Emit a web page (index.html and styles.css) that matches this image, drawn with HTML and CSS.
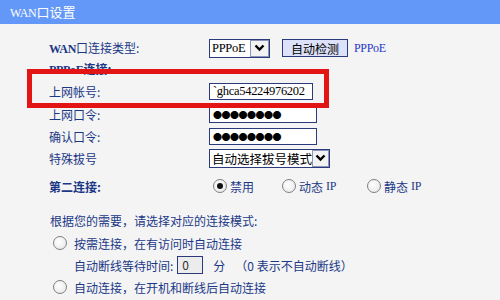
FILE: index.html
```html
<!DOCTYPE html>
<html lang="zh-CN">
  <head>
    <meta charset="UTF-8" />
    <title>WAN口设置</title>
    <link rel="stylesheet" href="styles.css">
  </head>
  <body>
    <div class="panel-title"><span class="en">WAN</span>口设置</div>

    <div class="panel">
      <div class="row first">
        <div class="label"><span class="en">WAN</span>口连接类型:</div>
        <div class="field">
          <div class="select small">
            <span class="select-text en">PPPoE</span>
            <span class="select-arrow">
              <svg width="11" height="8" viewBox="0 0 11 8"><path d="M1.5 1.5 L5.5 5.5 L9.5 1.5" fill="none" stroke="#000" stroke-width="2.4"/></svg>
            </span>
          </div>
          <button class="btn">自动检测</button>
          <span class="detected en">PPPoE</span>
        </div>
      </div>

      <div class="row sub">
        <div class="label bold"><span class="en">PPPoE</span>连接:</div>
      </div>

      <div class="row account">
        <div class="label">上网帐号:</div>
        <div class="field">
          <div class="input wide en">`ghca54224976202</div>
        </div>
      </div>

      <div class="row">
        <div class="label">上网口令:</div>
        <div class="field">
          <div class="input pwd">●●●●●●●●</div>
        </div>
      </div>

      <div class="row">
        <div class="label">确认口令:</div>
        <div class="field">
          <div class="input pwd">●●●●●●●●</div>
        </div>
      </div>

      <div class="row">
        <div class="label">特殊拔号</div>
        <div class="field">
          <div class="select large">
            <span class="select-text">自动选择拔号模式</span>
            <span class="select-arrow">
              <svg width="11" height="8" viewBox="0 0 11 8"><path d="M1.5 1.5 L5.5 5.5 L9.5 1.5" fill="none" stroke="#000" stroke-width="2.4"/></svg>
            </span>
          </div>
        </div>
      </div>

      <div class="row second">
        <div class="label bold">第二连接:</div>
        <div class="field radios">
          <label class="opt"><span class="radio checked"></span>禁用</label>
          <label class="opt"><span class="radio"></span>动态 <span class="en">IP</span></label>
          <label class="opt"><span class="radio"></span>静态 <span class="en">IP</span></label>
        </div>
      </div>

      <div class="modes">
        <p class="hint">根据您的需要，请选择对应的连接模式:</p>
        <div class="mode"><span class="radio"></span>按需连接，在有访问时自动连接</div>
        <div class="mode indent">
          自动断线等待时间:
          <span class="num-input">0</span>
          <span class="unit">分</span>
          <span>（0 表示不自动断线）</span>
        </div>
        <div class="mode"><span class="radio"></span>自动连接，在开机和断线后自动连接</div>
      </div>

      <!-- annotation box drawn over the account row -->
      <div class="mark"></div>
    </div>
  </body>
</html>
```

FILE: styles.css
```css
* {
  margin: 0;
  padding: 0;
  box-sizing: border-box;
}

body {
  font-family: "Noto Sans CJK SC", "Noto Sans", sans-serif;
  font-size: 12px;
  color: #1b3887;
  background: #f4f4f4;
  width: 500px;
  height: 300px;
  overflow: hidden;
}

/* SimSun-like latin: narrow serif */
.en {
  font-family: "Liberation Serif", "DejaVu Serif", serif;
  font-size: 12px;
  letter-spacing: -0.3px;
  font-weight: bold;
}

.panel-title {
  height: 24px;
  line-height: 23px;
  padding-left: 10px;
  background: #6498f8;
  color: #fff;
  font-size: 13px;
}

.panel-title .en {
  font-weight: normal;
}

.panel {
  position: relative;
  padding-top: 13px;
}

.row {
  display: flex;
  align-items: center;
  height: 22px;
}

.row.sub {
  height: 20px;
}

.row.account {
  height: 24px;
}

.row.second {
  margin-top: 6px;
}

.label {
  width: 209px;
  padding-left: 49px;
  white-space: nowrap;
}

.bold {
  font-weight: bold;
}

.field {
  display: flex;
  align-items: center;
}

.select {
  display: flex;
  align-items: center;
  height: 19px;
  background: #fff;
  border: 1px solid #2a3a7a;
  color: #000;
}

.select.small {
  width: 61px;
}

.select.large {
  width: 121px;
}

.select-text {
  flex: 1;
  padding-left: 2px;
  white-space: nowrap;
}

.select .en,
.input.en {
  font-weight: normal;
  font-size: 12.5px;
}

.select.large .select-text {
  font-size: 12.5px;
}

.select-arrow {
  width: 19px;
  height: 17px;
  display: flex;
  align-items: center;
  justify-content: center;
  border: 1px solid #8a94b8;
  background: #f2f2f2;
}

.btn {
  margin-left: 12px;
  width: 66px;
  height: 18px;
  border: 1px solid #2a3a7a;
  background: #dde1f9;
  font-family: "Noto Sans CJK SC", sans-serif;
  font-size: 12px;
  color: #000;
}

.detected {
  margin-left: 6px;
  color: #2838c8;
  font-weight: normal;
}

.input {
  height: 17px;
  background: #fff;
  border: 1px solid #2a3a7a;
  color: #000;
  padding-left: 3px;
  line-height: 15px;
  white-space: nowrap;
  overflow: hidden;
}

.input.wide {
  width: 104px;
}

.input.pwd {
  width: 108px;
  font-size: 9px;
  letter-spacing: -0.5px;
}

.radios {
  padding-left: 4px;
}

.radios .en {
  font-weight: normal;
}

.opt {
  display: flex;
  align-items: center;
  gap: 3px;
}

.opt:nth-child(1) {
  width: 69px;
}

.opt:nth-child(2) {
  width: 85px;
}

.radio {
  display: inline-block;
  width: 14px;
  height: 14px;
  border-radius: 50%;
  border: 1px solid #808080;
  background: radial-gradient(circle at 40% 40%, #fff 0%, #e4e4e4 100%);
  position: relative;
  flex-shrink: 0;
}

.radio.checked::after {
  content: "";
  position: absolute;
  top: 3px;
  left: 3px;
  width: 6px;
  height: 6px;
  border-radius: 50%;
  background: #111;
}

.modes {
  margin-top: 13px;
}

.hint {
  height: 22px;
  line-height: 22px;
  padding-left: 50px;
}

.mode {
  display: flex;
  align-items: center;
  gap: 7px;
  height: 22px;
  padding-left: 53px;
}

.mode.indent {
  padding-left: 74px;
  gap: 0;
}

.num-input {
  display: inline-block;
  width: 26px;
  height: 18px;
  margin-left: 4px;
  padding-left: 4px;
  line-height: 16px;
  border: 1px solid #2a3a7a;
  background: #ececec;
  color: #333;
}

.unit {
  margin: 0 10px 0 10px;
}

.mark {
  position: absolute;
  left: 27px;
  top: 45px;
  width: 302px;
  height: 39px;
  border: 5px solid #e21414;
}
```
